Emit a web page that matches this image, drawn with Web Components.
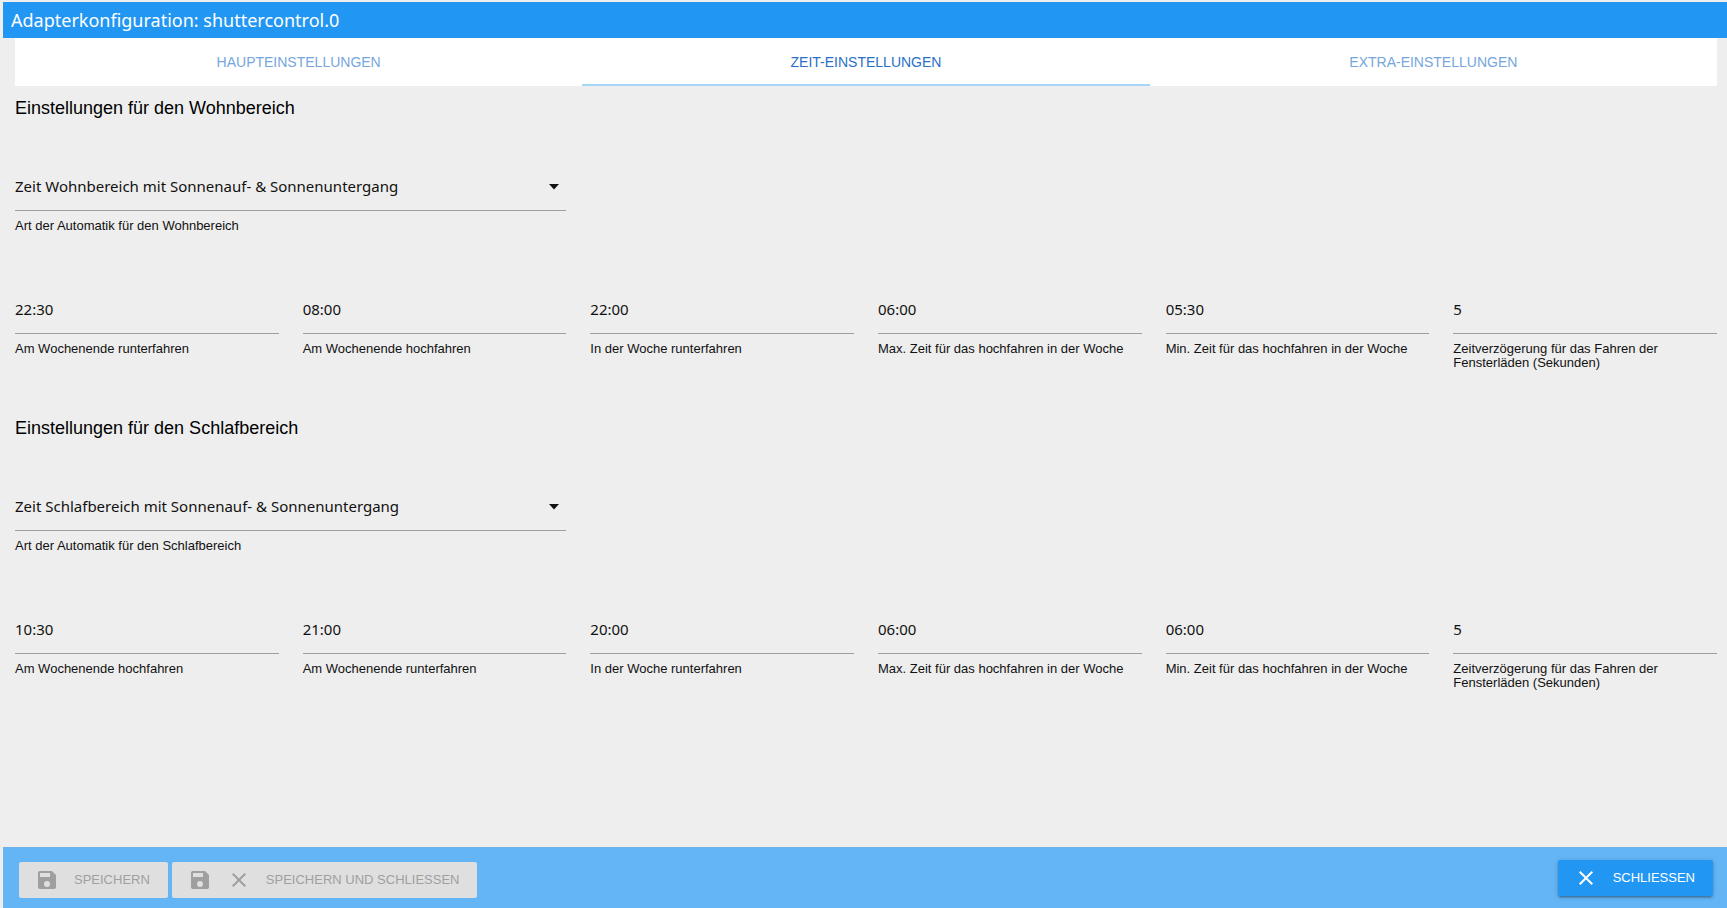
<!DOCTYPE html>
<html lang="de">
<head>
<meta charset="utf-8">
<title>Adapterkonfiguration</title>
<style>
  html, body { height: 100%; }
  body { margin: 0; background: #eee; color: #000; font-family: "Liberation Sans", Arial, sans-serif; }
</style>
</head>
<body>
<config-dialog heading="Adapterkonfiguration: shuttercontrol.0">
  <tab-bar slot="tabs">
    <tab-item href="#main">Haupteinstellungen</tab-item>
    <tab-item href="#time" active>Zeit-Einstellungen</tab-item>
    <tab-item href="#extra">Extra-Einstellungen</tab-item>
  </tab-bar>
  <settings-section heading="Einstellungen für den Wohnbereich">
    <select-field slot="mode" value="Zeit Wohnbereich mit Sonnenauf- &amp; Sonnenuntergang" label="Art der Automatik für den Wohnbereich"></select-field>
    <text-field value="22:30" label="Am Wochenende runterfahren"></text-field>
    <text-field value="08:00" label="Am Wochenende hochfahren"></text-field>
    <text-field value="22:00" label="In der Woche runterfahren"></text-field>
    <text-field value="06:00" label="Max. Zeit für das hochfahren in der Woche"></text-field>
    <text-field value="05:30" label="Min. Zeit für das hochfahren in der Woche"></text-field>
    <text-field value="5" label="Zeitverzögerung für das Fahren der Fensterläden (Sekunden)"></text-field>
  </settings-section>
  <settings-section heading="Einstellungen für den Schlafbereich">
    <select-field slot="mode" value="Zeit Schlafbereich mit Sonnenauf- &amp; Sonnenuntergang" label="Art der Automatik für den Schlafbereich"></select-field>
    <text-field value="10:30" label="Am Wochenende hochfahren"></text-field>
    <text-field value="21:00" label="Am Wochenende runterfahren"></text-field>
    <text-field value="20:00" label="In der Woche runterfahren"></text-field>
    <text-field value="06:00" label="Max. Zeit für das hochfahren in der Woche"></text-field>
    <text-field value="06:00" label="Min. Zeit für das hochfahren in der Woche"></text-field>
    <text-field value="5" label="Zeitverzögerung für das Fahren der Fensterläden (Sekunden)"></text-field>
  </settings-section>
  <action-button slot="left" icons="save" disabled>Speichern</action-button>
  <action-button slot="left" icons="save close" disabled>Speichern und Schliessen</action-button>
  <action-button slot="right" icons="close">Schliessen</action-button>
</config-dialog>

<script>
const define = (name, render) => customElements.define(name, class extends HTMLElement {
  connectedCallback() {
    if (this.shadowRoot) return;
    this.attachShadow({ mode: 'open' }).innerHTML = render(this);
  }
});
const attr = (el, name) => (el.getAttribute(name) || '')
  .replace(/&/g, '&amp;').replace(/"/g, '&quot;').replace(/</g, '&lt;');

define('config-dialog', el => `
  <style>
    :host { display: flex; flex-direction: column; box-sizing: border-box; min-height: 100vh; padding: 2px 0 0 3px; }
    header { background: #2196f3; color: #fff; height: 36px; padding-left: 8px; display: flex; align-items: center; }
    h1 { margin: 0; font: 400 18px/24px "Noto Sans", sans-serif; }
    main { flex: 1; padding: 0 10px 0 12px; }
    footer { background: #64b5f6; height: 61px; box-sizing: border-box; padding: 12px 14px 0 16px;
      display: flex; justify-content: space-between; align-items: flex-start; border-top: 1px solid #70b2ea; }
    .left { display: flex; gap: 4px; padding-top: 2px; }
  </style>
  <header><h1>${attr(el, 'heading')}</h1></header>
  <main><slot name="tabs"></slot><slot></slot></main>
  <footer><div class="left"><slot name="left"></slot></div><slot name="right"></slot></footer>`);

define('tab-bar', () => `
  <style>
    :host { display: block; background: #fff; }
    nav { display: grid; grid-template-columns: repeat(3, 1fr); }
  </style>
  <nav><slot></slot></nav>`);

define('tab-item', el => `
  <style>
    :host { display: block; }
    a { display: block; box-sizing: border-box; height: 48px; text-align: center;
      font-size: 14px; line-height: 48px; color: #75a6dd; text-transform: uppercase; text-decoration: none; }
    :host([active]) a { color: #2a70c8; border-bottom: 2px solid #a6d7f8; }
  </style>
  <a href="${attr(el, 'href')}"><slot></slot></a>`);

define('settings-section', el => `
  <style>
    :host { display: block; padding-bottom: 36px; }
    h2 { margin: 0; padding-top: 11px; font-weight: 400; font-size: 18px; line-height: 22px; }
    .grid { display: grid; grid-template-columns: repeat(6, 1fr); column-gap: 24px; row-gap: 48px; padding-top: 44px; }
    ::slotted([slot="mode"]) { grid-column: 1 / 3; }
    .break { grid-column: 3 / -1; }
  </style>
  <h2>${attr(el, 'heading')}</h2>
  <div class="grid"><slot name="mode"></slot><div class="break"></div><slot></slot></div>`);

const fieldStyle = `
    :host { display: block; min-height: 75px; }
    input, select { display: block; width: 100%; height: 48px; box-sizing: border-box; margin: 0; padding: 0 0 2px;
      border: 0; border-bottom: 1px solid #9e9e9e; border-radius: 0; background: none; outline: 0; color: #111;
      font: 400 15px/22px "Noto Sans", sans-serif; }
    label { display: block; padding-top: 8px; font-size: 13px; line-height: 14px; color: #111; }`;

define('text-field', el => `
  <style>${fieldStyle}</style>
  <input id="f" type="text" value="${attr(el, 'value')}"><label for="f">${attr(el, 'label')}</label>`);

define('select-field', el => `
  <style>${fieldStyle}
    .box { display: grid; align-items: center; }
    select, svg { grid-area: 1 / 1; }
    select { appearance: none; }
    svg { justify-self: end; margin-right: 7px; pointer-events: none; }
  </style>
  <div class="box">
    <select id="f"><option>${attr(el, 'value')}</option></select>
    <svg width="10" height="6" viewBox="0 0 10 6"><path d="M0 0h10L5 5.500z" fill="#111"/></svg>
  </div>
  <label for="f">${attr(el, 'label')}</label>`);

const icons = {
  save: 'M17 3H5a2 2 0 0 0-2 2v14a2 2 0 0 0 2 2h14a2 2 0 0 0 2-2V7l-4-4zm-5 16a3 3 0 1 1 0-6 3 3 0 0 1 0 6zm3-10H5V5h10v4z',
  close: 'M19 6.410 17.590 5 12 10.590 6.410 5 5 6.410 10.590 12 5 17.590 6.410 19 12 13.410 17.590 19 19 17.590 13.410 12z'
};
define('action-button', el => `
  <style>
    :host { display: block; }
    button { display: flex; align-items: center; height: 36px; margin: 0; padding: 0 18px 0 16px; border: 0; border-radius: 2px;
      background: #2196f3; color: #fff; font: 400 13px/36px "Liberation Sans", Arial, sans-serif; text-transform: uppercase;
      box-shadow: 0 2px 2px rgba(0,0,0,.14), 0 3px 1px -2px rgba(0,0,0,.12), 0 1px 5px rgba(0,0,0,.2); }
    button:disabled { background: #dfdfdf; color: #9f9f9f; box-shadow: none; }
    svg { fill: currentColor; margin-right: 15px; }
  </style>
  <button type="button"${el.hasAttribute('disabled') ? ' disabled' : ''}>${
    el.getAttribute('icons').split(' ').map(n =>
      `<svg width="24" height="24" viewBox="0 0 24 24" aria-hidden="true"><path d="${icons[n]}"/></svg>`).join('')
  }<slot></slot></button>`);
</script>
</body>
</html>
